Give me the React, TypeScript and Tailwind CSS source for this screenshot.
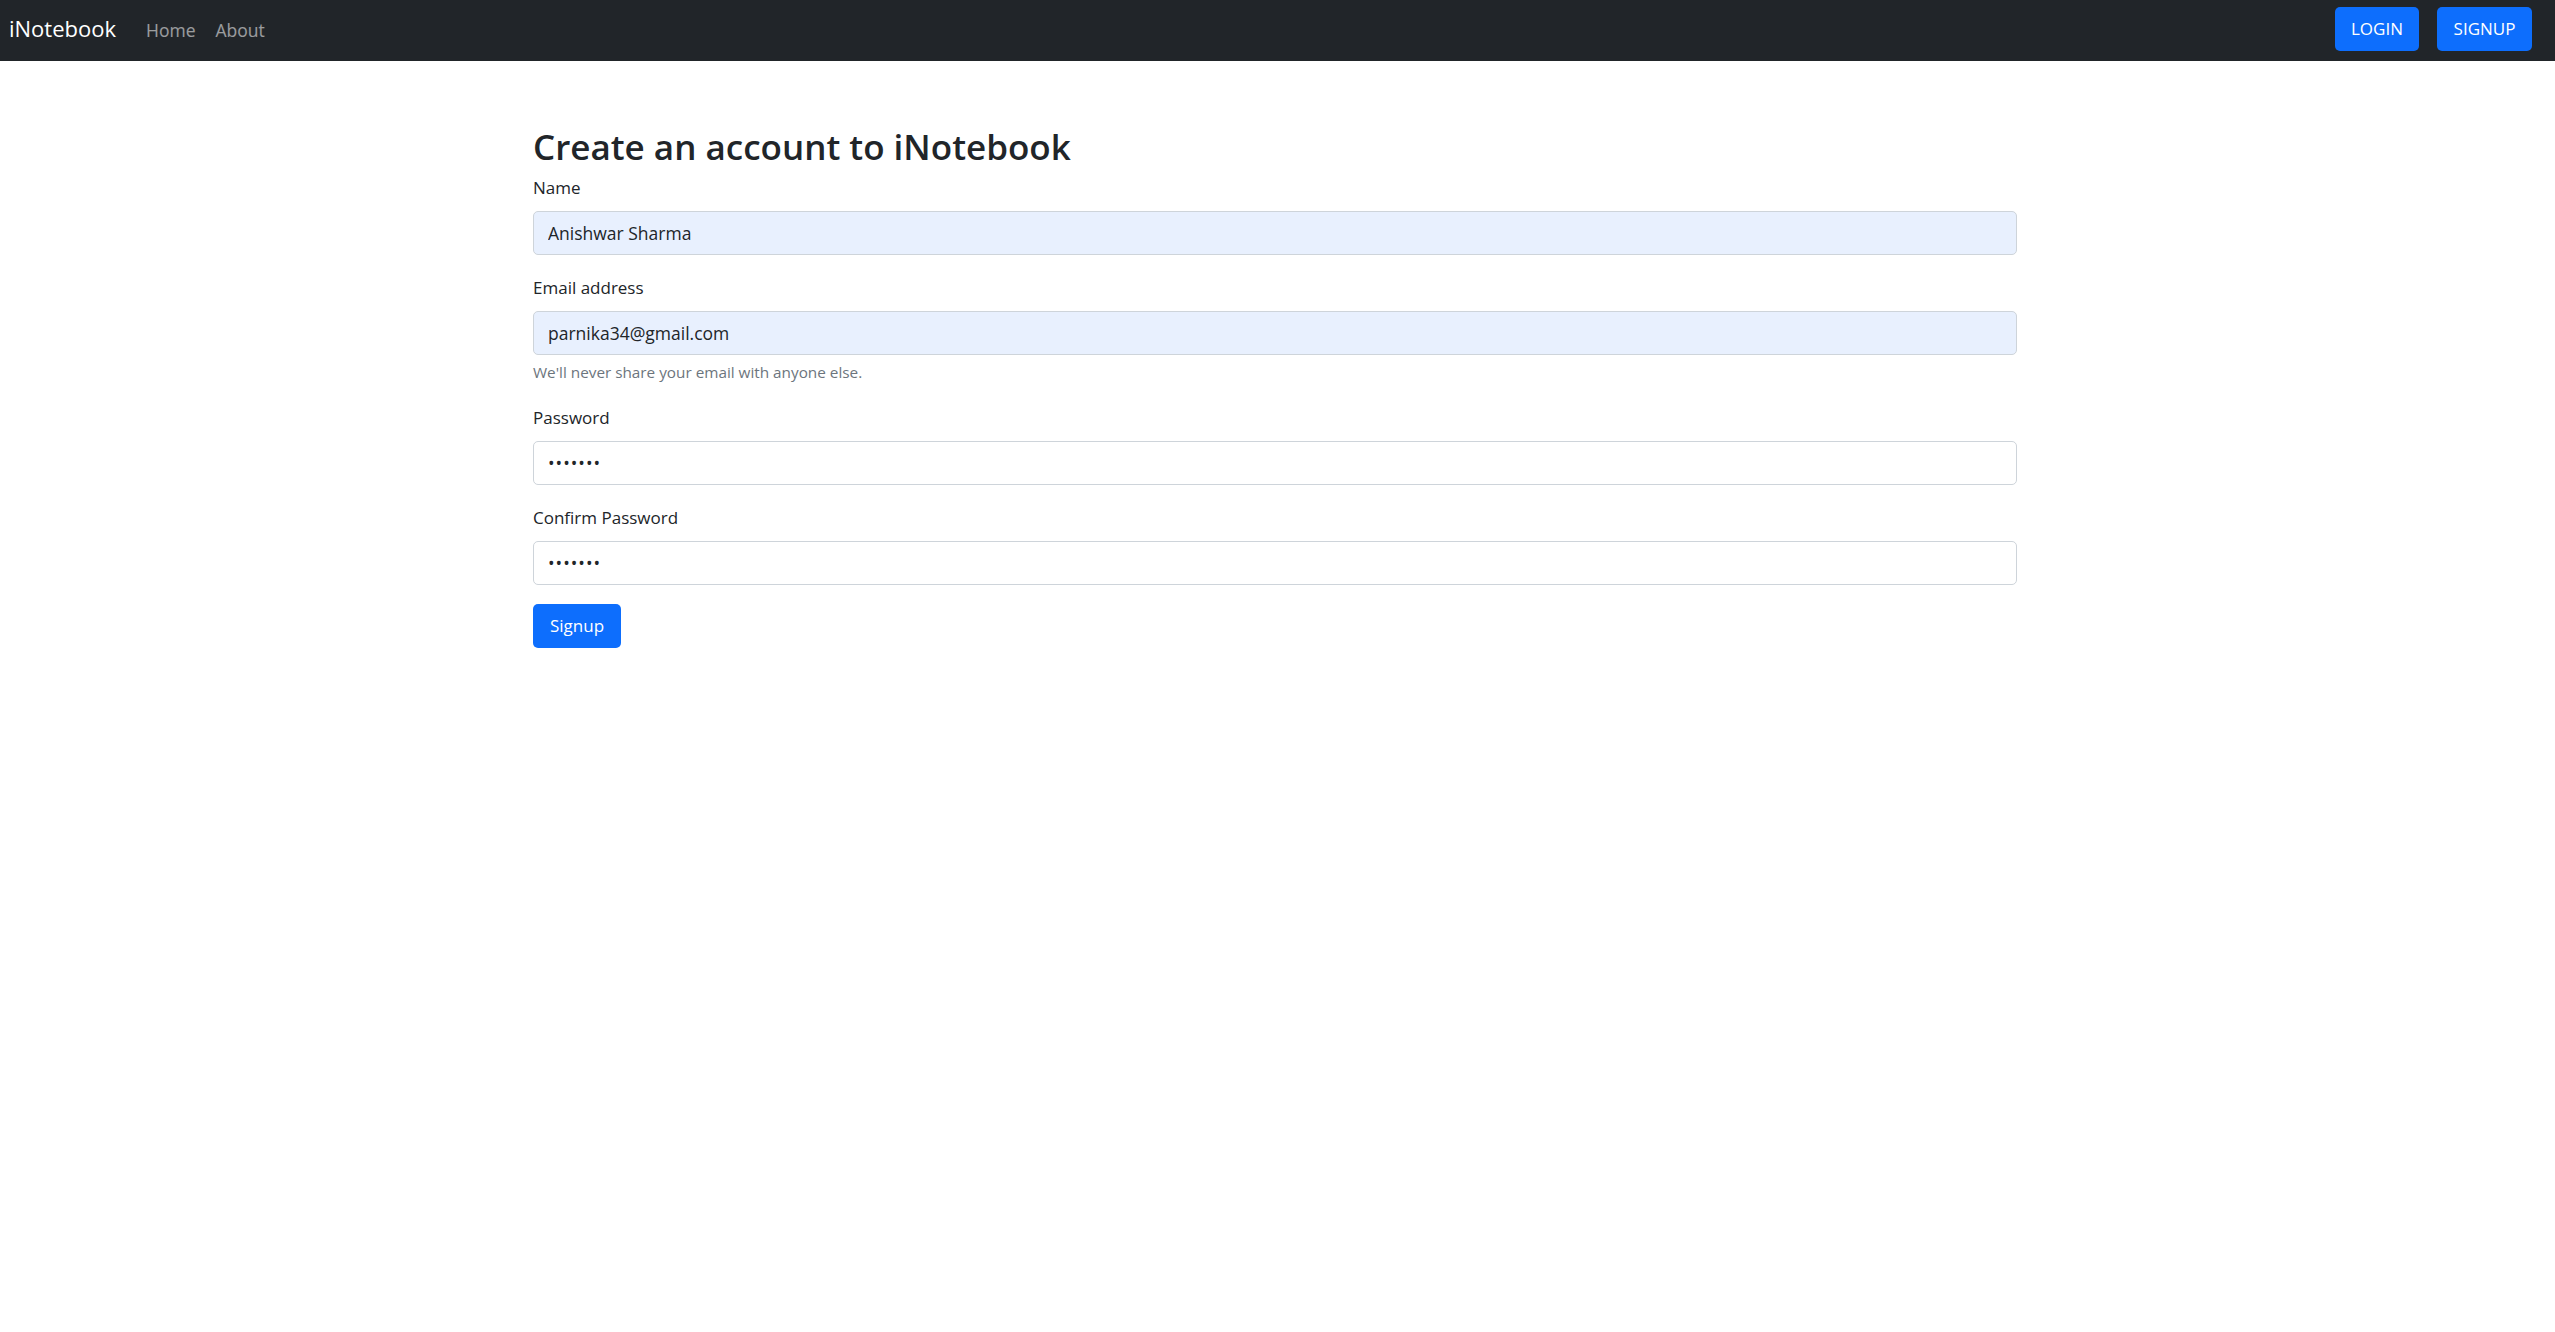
import React from "react";

function Field({
  label,
  type,
  value,
  autofill,
  help,
}: {
  label: string;
  type: string;
  value: string;
  autofill?: boolean;
  help?: string;
}) {
  return (
    <div className="mb-[19px]">
      <label className="block mb-[9px] text-[17px] leading-[28px] text-[#212529]">{label}</label>
      <input
        type={type}
        defaultValue={value}
        className={
          "block w-full h-[44px] px-[14px] rounded-[5px] border border-[#ced4da] text-[17.5px] text-[#212529] outline-none font-['Open_Sans',sans-serif] " +
          (autofill ? "bg-[#e8f0fe]" : "bg-white tracking-[1px]")
        }
      />
      {help && (
        <div className="mt-[5px] text-[15.3px] leading-[25px] text-[#6c757d]">{help}</div>
      )}
    </div>
  );
}

export default function App() {
  return (
    <div className="min-h-screen bg-white font-['Open_Sans',sans-serif]">
      <nav className="h-[61px] bg-[#212529] flex items-center justify-between pl-[9px] pr-[23px] pb-[3px]">
        <div className="flex items-baseline pb-[3px]">
          <span className="text-[22px] leading-[30px] text-white">iNotebook</span>
          <a className="ml-[30px] text-[17.5px] leading-[26px] text-white/55">Home</a>
          <a className="ml-[20px] text-[17.5px] leading-[26px] text-white/55">About</a>
        </div>
        <div className="flex items-center gap-[18px]">
          <button className="w-[84px] h-[44px] rounded-[5px] bg-[#0d6efd] text-white text-[17px] leading-[26px]">
            LOGIN
          </button>
          <button className="w-[95px] h-[44px] rounded-[5px] bg-[#0d6efd] text-white text-[17px] leading-[26px]">
            SIGNUP
          </button>
        </div>
      </nav>
      <div className="ml-[533px] w-[1484px] pt-[64px]">
        <h2 className="text-[35px] leading-[44px] font-semibold text-[#212529] mb-[5px]">
          Create an account to iNotebook
        </h2>
        <form>
          <Field label="Name" type="text" value="Anishwar Sharma" autofill />
          <Field
            label="Email address"
            type="email"
            value="parnika34@gmail.com"
            autofill
            help="We'll never share your email with anyone else."
          />
          <Field label="Password" type="password" value="1234567" />
          <Field label="Confirm Password" type="password" value="1234567" />
          <button
            type="button"
            className="w-[88px] h-[44px] rounded-[5px] bg-[#0d6efd] text-white text-[17px] leading-[26px]"
          >
            Signup
          </button>
        </form>
      </div>
    </div>
  );
}
